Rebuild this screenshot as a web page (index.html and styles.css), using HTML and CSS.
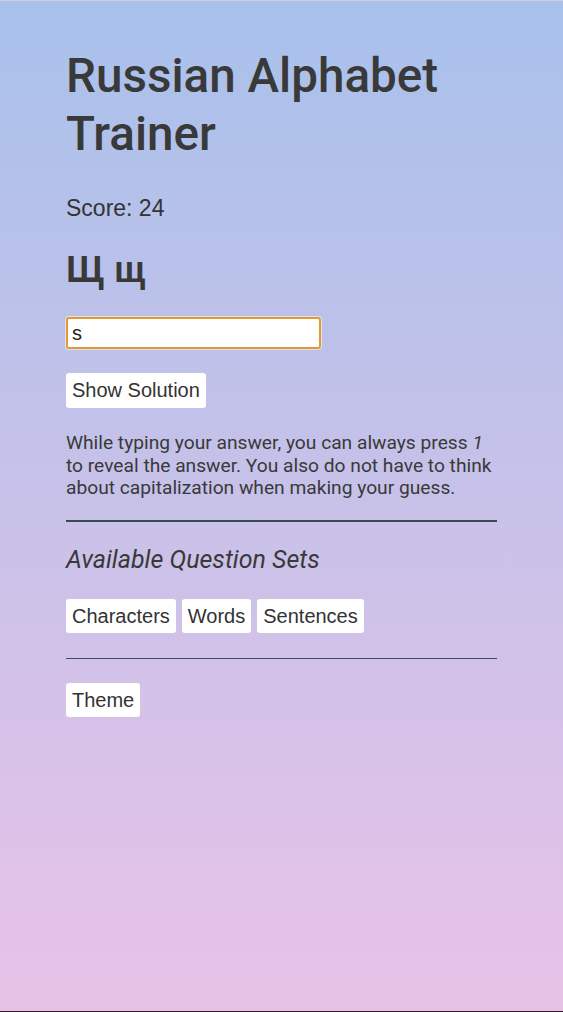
FILE: index.html
```html
<!DOCTYPE html>
<html lang="en">
<head>
<meta charset="utf-8">
<title>Russian Alphabet Trainer</title>
<link rel="stylesheet" href="styles.css">
</head>
<body>
<main class="app">
  <h1 class="title">Russian Alphabet Trainer</h1>
  <p class="score"><strong>Score</strong>: 24</p>
  <h2 class="letter">Щ щ</h2>
  <input class="answer" type="text" value="s">
  <div class="row first"><button class="btn">Show Solution</button></div>
  <p class="info">While typing your answer, you can always press <em>1</em> to reveal the answer. You also do not have to think about capitalization when making your guess.</p>
  <hr class="rule thick">
  <h3 class="sets-title">Available Question Sets</h3>
  <div class="row sets">
    <button class="btn">Characters</button>
    <button class="btn">Words</button>
    <button class="btn">Sentences</button>
  </div>
  <hr class="rule thin">
  <div class="row theme"><button class="btn">Theme</button></div>
</main>
</body>
</html>
```
FILE: styles.css
```css
html, body {
  margin: 0;
  padding: 0;
}
body {
  min-height: 100vh;
  box-sizing: border-box;
  border-top: 1px solid #cfd0d4;
  border-bottom: 1px solid #231d2a;
  background: linear-gradient(180deg, #a8c1eb 0%, #e8c2e7 100%);
  font-family: Roboto, "Liberation Sans", sans-serif;
  color: #393939;
}
.app {
  width: 431px;
  margin: 0 auto;
  padding-top: 46px;
}
.title {
  margin: 0;
  font-size: 47.6px;
  line-height: 58px;
  font-weight: 500;
  color: #393939;
}
.score {
  margin: 32px 0 0;
  font-family: "Liberation Sans", Arial, sans-serif;
  font-size: 23px;
  line-height: normal;
  color: #333;
}
.score strong {
  font-weight: 400;
}
.letter {
  margin: 27px 0 0;
  font-family: "Liberation Sans", Arial, sans-serif;
  font-size: 37px;
  line-height: normal;
  font-weight: 700;
}
.answer {
  display: block;
  margin: 26px 0 0;
  width: 255px;
  height: 32px;
  box-sizing: border-box;
  border: 2px solid #e39a2f;
  border-radius: 3px;
  box-shadow: 0 0 0 1px rgba(255,255,255,0.5);
  padding: 0 4px;
  font-family: "Liberation Sans", Arial, sans-serif;
  font-size: 20px;
  color: #222;
  background: #fff;
  outline: none;
}
.row {
  display: flex;
  gap: 6px;
}
.row.first {
  margin-top: 24px;
}
.btn {
  font-family: "Liberation Sans", Arial, sans-serif;
  font-size: 20px;
  line-height: 23px;
  padding: 6px 6px;
  border: none;
  border-radius: 3px;
  background: #fff;
  color: #333;
}
.sets .btn, .theme .btn {
  padding: 6px 6px 5px;
}
.info {
  margin: 24px 0 0;
  font-size: 19.2px;
  line-height: 22.5px;
}
.rule {
  border: none;
  margin: 0;
}
.rule.thick {
  margin-top: 20.5px;
  height: 2px;
  background: #3b4a55;
}
.sets-title {
  margin: 24px 0 0;
  font-size: 25px;
  font-style: italic;
  font-weight: 400;
  line-height: 28px;
}
.row.sets {
  margin-top: 25px;
}
.rule.thin {
  margin-top: 25px;
  height: 1px;
  background: #35505a;
}
.row.theme {
  margin-top: 24px;
}
```
